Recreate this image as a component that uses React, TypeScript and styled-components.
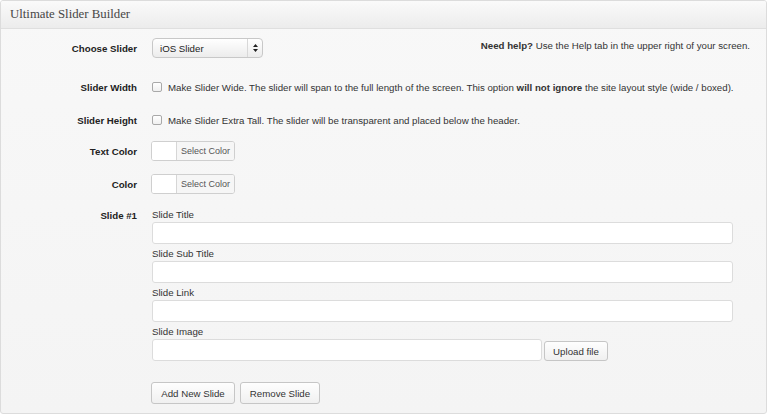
import React from "react";
import styled, { createGlobalStyle } from "styled-components";

const Global = createGlobalStyle`
  html, body { margin: 0; padding: 0; background: #fff; }
  body { font-family: "Liberation Sans", Arial, sans-serif; font-size: 9.7px; color: #333; }
  * { box-sizing: border-box; }
`;

const Panel = styled.div`
  width: 767px;
  height: 414px;
  border: 1px solid #dcdcdc;
  border-radius: 3px;
  background: linear-gradient(#f8f8f8, #f4f4f4);
  overflow: hidden;
`;

const Header = styled.div`
  height: 28px;
  border-bottom: 1px solid #dfdfdf;
  background: linear-gradient(#fafafa, #ececec);
  display: flex;
  align-items: center;
  padding-left: 9px;
`;

const Title = styled.h3`
  margin: 0;
  font-family: "Liberation Serif", "Times New Roman", serif;
  font-weight: normal;
  font-size: 12.8px;
  color: #464646;
`;

const Form = styled.div`
  padding-top: 8px;
`;

const Row = styled.div<{ $mt?: number; $h?: number; $top?: boolean }>`
  display: flex;
  align-items: ${(p) => (p.$top ? "flex-start" : "center")};
  margin-top: ${(p) => p.$mt ?? 0}px;
  min-height: ${(p) => p.$h ?? 14}px;
`;

const Label = styled.div<{ $pt?: number }>`
  width: 136px;
  flex: none;
  text-align: right;
  font-weight: bold;
  color: #222;
  font-size: 9.7px;
  padding-top: ${(p) => p.$pt ?? 0}px;
`;

const Content = styled.div`
  flex: 1;
  margin-left: 14px;
  display: flex;
  align-items: center;
  padding-right: 16px;
`;

const Stack = styled.div`
  flex: 1;
  margin-left: 15px;
  display: flex;
  flex-direction: column;
`;

const Select = styled.div`
  width: 111px;
  height: 20px;
  border: 1px solid #c8c8c8;
  border-radius: 4px;
  background: linear-gradient(#ffffff, #ececec);
  display: flex;
  align-items: center;
  padding-left: 7px;
  color: #222;
  margin-left: 1px;
`;

const SelectText = styled.span`
  flex: 1;
`;

const SelectArrows = styled.span`
  width: 15px;
  height: 100%;
  border-left: 1px solid #d8d8d8;
  display: flex;
  align-items: center;
  justify-content: center;
`;

const Help = styled.div`
  margin-left: auto;
  margin-top: -6px;
  color: #333;
`;

const Check = styled.span`
  width: 10px;
  height: 10px;
  border: 1px solid #a9a9a9;
  border-radius: 2px;
  background: linear-gradient(#fff, #f0f0f0);
  margin-left: 1px;
  margin-right: 6px;
  flex: none;
`;

const ColorPicker = styled.div`
  display: flex;
  width: 84px;
  height: 20px;
  border: 1px solid #cfcfcf;
  border-radius: 3px;
  overflow: hidden;
  background: #fff;
`;

const Swatch = styled.span`
  width: 25px;
  flex: none;
  background: #fff;
  border-right: 1px solid #d6d6d6;
`;

const PickLabel = styled.span`
  flex: 1;
  display: flex;
  align-items: center;
  justify-content: center;
  background: #f6f6f6;
  font-size: 9px;
  color: #555;
`;

const FieldLabel = styled.div`
  line-height: 15px;
  height: 15px;
  color: #333;
`;

const TextInput = styled.div<{ $w?: number }>`
  width: ${(p) => p.$w ?? 581}px;
  height: 22px;
  background: #fff;
  border: 1px solid #dcdcdc;
  border-radius: 3px;
  margin-bottom: 2px;
`;

const InlineRow = styled.div`
  display: flex;
  align-items: center;
  gap: 2px;
`;

const Button = styled.button<{ $w: number; $h?: number }>`
  width: ${(p) => p.$w}px;
  height: ${(p) => p.$h ?? 22}px;
  border: 1px solid #c6c6c6;
  border-radius: 3px;
  background: linear-gradient(#fefefe, #f0f0f0);
  font-family: "Liberation Sans", Arial, sans-serif;
  font-size: 9.7px;
  color: #333;
  padding: 0;
  cursor: pointer;
`;

const Buttons = styled.div`
  display: flex;
  gap: 5px;
  margin-top: 19px;
  margin-left: -1px;
`;

export default function App() {
  return (
    <>
      <Global />
      <Panel>
        <Header>
          <Title>Ultimate Slider Builder</Title>
        </Header>
        <Form>
          <Row $mt={1} $h={20}>
            <Label>Choose Slider</Label>
            <Content>
              <Select>
                <SelectText>iOS Slider</SelectText>
                <SelectArrows>
                  <svg width="5" height="8" viewBox="0 0 5 8">
                    <path d="M2.5 0 L5 3 L0 3 Z M2.5 8 L5 5 L0 5 Z" fill="#222" />
                  </svg>
                </SelectArrows>
              </Select>
              <Help>
                <b>Need help?</b> Use the Help tab in the upper right of your screen.
              </Help>
            </Content>
          </Row>
          <Row $mt={22}>
            <Label>Slider Width</Label>
            <Content>
              <Check />
              <span>
                Make Slider Wide. The slider will span to the full length of the screen. This option{" "}
                <b>will not ignore</b> the site layout style (wide / boxed).
              </span>
            </Content>
          </Row>
          <Row $mt={19}>
            <Label>Slider Height</Label>
            <Content>
              <Check />
              <span>Make Slider Extra Tall. The slider will be transparent and placed below the header.</span>
            </Content>
          </Row>
          <Row $mt={14} $h={20}>
            <Label>Text Color</Label>
            <Content>
              <ColorPicker>
                <Swatch />
                <PickLabel>Select Color</PickLabel>
              </ColorPicker>
            </Content>
          </Row>
          <Row $mt={13} $h={20}>
            <Label>Color</Label>
            <Content>
              <ColorPicker>
                <Swatch />
                <PickLabel>Select Color</PickLabel>
              </ColorPicker>
            </Content>
          </Row>
          <Row $mt={13} $top>
            <Label $pt={3}>Slide #1</Label>
            <Stack>
              <FieldLabel>Slide Title</FieldLabel>
              <TextInput />
              <FieldLabel>Slide Sub Title</FieldLabel>
              <TextInput />
              <FieldLabel>Slide Link</FieldLabel>
              <TextInput />
              <FieldLabel>Slide Image</FieldLabel>
              <InlineRow>
                <TextInput $w={390} />
                <Button $w={64} $h={20}>Upload file</Button>
              </InlineRow>
              <Buttons>
                <Button $w={84}>Add New Slide</Button>
                <Button $w={80}>Remove Slide</Button>
              </Buttons>
            </Stack>
          </Row>
        </Form>
      </Panel>
    </>
  );
}
